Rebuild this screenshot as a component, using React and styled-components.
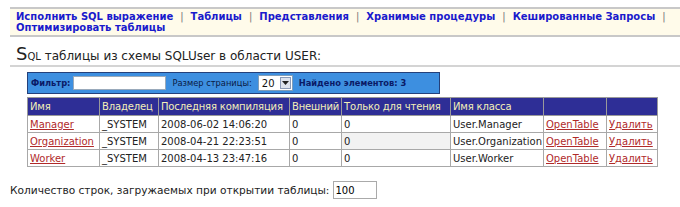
import React from 'react';
import styled, { createGlobalStyle } from 'styled-components';

const GlobalStyle = createGlobalStyle`
  html, body { margin: 0; padding: 0; background: #fff; }
  body { font-family: "DejaVu Sans", Verdana, sans-serif; color: #222; }
`;

const Page = styled.div`
  width: 680px;
  height: 207px;
  padding: 7px 0 0 10px;
  box-sizing: border-box;
  overflow: hidden;
`;

const Menu = styled.div`
  background: #fffbea;
  border-top: 2px solid #c8c8c8;
  border-bottom: 2px solid #c8c8c8;
  padding: 2px 6px 2px 6px;
  font-size: 10px;
  font-weight: bold;
  line-height: 11px;
`;

const MenuLink = styled.a`
  color: #1a1acc;
  text-decoration: none;
`;

const Sep = styled.span`
  color: #777;
  font-weight: normal;
  margin: 0 7px;
`;

const Title = styled.div`
  padding: 6px 0 0 6px;
  height: 22px;
  font-size: 12px;
  color: #222;
  border-bottom: 2px solid #d4d4d4;
`;

const BigS = styled.span`
  font-size: 18px;
`;

const SmallCaps = styled.span`
  font-size: 10px;
`;

const Content = styled.div`
  padding: 5px 0 0 17px;
`;

const FilterBar = styled.div`
  display: flex;
  align-items: center;
  width: 408px;
  height: 20px;
  background: #3d8fe0;
  border: 1px solid #24407a;
  font-size: 8.3px;
  color: #0a1a55;
  padding-left: 3px;
  box-sizing: content-box;
`;

const FilterLabel = styled.span`
  font-weight: ${p => (p.bold ? 'bold' : 'normal')};
  color: ${p => (p.bold ? '#0a1a66' : '#0a1a44')};
  margin-right: ${p => p.gap || 0}px;
`;

const FilterInput = styled.input`
  width: 91px;
  height: 12px;
  border: 1px solid #9ab;
  padding: 0;
  margin-right: 6px;
`;

const Select = styled.div`
  display: flex;
  align-items: center;
  width: 30px;
  height: 14px;
  background: #fff;
  border: 1px solid #7f9db9;
  margin: 0 6px 0 6px;
  font-size: 10px;
  color: #111;
  padding-left: 3px;
  justify-content: space-between;
`;

const Arrow = styled.span`
  width: 11px;
  height: 12px;
  margin-right: 1px;
  background: #dde3ee;
  border: 1px solid #8a9ab8;
  box-sizing: border-box;
  display: flex;
  align-items: center;
  justify-content: center;
`;

const Table = styled.table`
  margin-top: 3px;
  width: 630px;
  table-layout: fixed;
  border-collapse: collapse;
  font-size: 10px;
  border: 1px solid #888;
`;

const Th = styled.th`
  background: #2e2e96;
  color: #f4f0b8;
  font-weight: normal;
  text-align: left;
  height: 17px;
  padding: 0 2px;
  border: 1px solid #9a9a9a;
  white-space: nowrap;
  overflow: hidden;
  letter-spacing: -0.15px;
`;

const Td = styled.td`
  height: 16px;
  padding: 0 2px;
  border: 1px solid #a8a8a8;
  background: ${p => (p.shade ? '#f2f2f2' : '#fff')};
  color: #222;
  white-space: nowrap;
  overflow: hidden;
`;

const CellLink = styled.a`
  color: #b02a2a;
  text-decoration: underline;
`;

const Footer = styled.div`
  display: flex;
  align-items: center;
  margin-top: 14px;
  margin-left: -17px;
  font-size: 10.6px;
  color: #222;
`;

const RowsInput = styled.input`
  width: 40px;
  height: 16px;
  margin-left: 4px;
  border: 1px solid #aaa;
  padding: 0 1px;
  font-size: 10px;
  font-family: "DejaVu Sans", Verdana, sans-serif;
`;

const menu = [
  'Исполнить SQL выражение',
  'Таблицы',
  'Представления',
  'Хранимые процедуры',
  'Кешированные Запросы',
];

const headers = [
  ['Имя', 72],
  ['Владелец', 59],
  ['Последняя компиляция', 131],
  ['Внешний', 52],
  ['Только для чтения', 109],
  ['Имя класса', 93],
  ['', 63],
  ['', 51],
];

const rows = [
  ['Manager', '2008-06-02 14:06:20'],
  ['Organization', '2008-04-21 22:23:51'],
  ['Worker', '2008-04-13 23:47:16'],
];

export default function App() {
  return (
    <>
      <GlobalStyle />
      <Page>
        <Menu>
          {menu.map(m => (
            <React.Fragment key={m}>
              <MenuLink href="#">{m}</MenuLink>
              <Sep>|</Sep>
            </React.Fragment>
          ))}
          <br />
          <MenuLink href="#">Оптимизировать таблицы</MenuLink>
        </Menu>
        <Title>
          <BigS>S</BigS>
          <SmallCaps>QL</SmallCaps> таблицы из схемы SQLUser в области USER:
        </Title>
        <Content>
          <FilterBar>
            <FilterLabel bold gap={3}>Фильтр:</FilterLabel>
            <FilterInput />
            <FilterLabel>Размер страницы:</FilterLabel>
            <Select>
              20
              <Arrow>
                <svg width="7" height="4" viewBox="0 0 7 4">
                  <path d="M0 0h7L3.5 4z" fill="#222" />
                </svg>
              </Arrow>
            </Select>
            <FilterLabel bold>Найдено элементов: 3</FilterLabel>
          </FilterBar>
          <Table>
            <colgroup>
              {headers.map(([h, w], i) => (
                <col key={i} style={{ width: w }} />
              ))}
            </colgroup>
            <thead>
              <tr>
                {headers.map(([h], i) => (
                  <Th key={i}>{h}</Th>
                ))}
              </tr>
            </thead>
            <tbody>
              {rows.map(([name, date], i) => (
                <tr key={name}>
                  <Td><CellLink href="#">{name}</CellLink></Td>
                  <Td>_SYSTEM</Td>
                  <Td>{date}</Td>
                  <Td>0</Td>
                  <Td shade={i === 1}>0</Td>
                  <Td>User.{name}</Td>
                  <Td><CellLink href="#">OpenTable</CellLink></Td>
                  <Td><CellLink href="#">Удалить</CellLink></Td>
                </tr>
              ))}
            </tbody>
          </Table>
          <Footer>
            Количество строк, загружаемых при открытии таблицы:
            <RowsInput defaultValue="100" />
          </Footer>
        </Content>
      </Page>
    </>
  );
}
